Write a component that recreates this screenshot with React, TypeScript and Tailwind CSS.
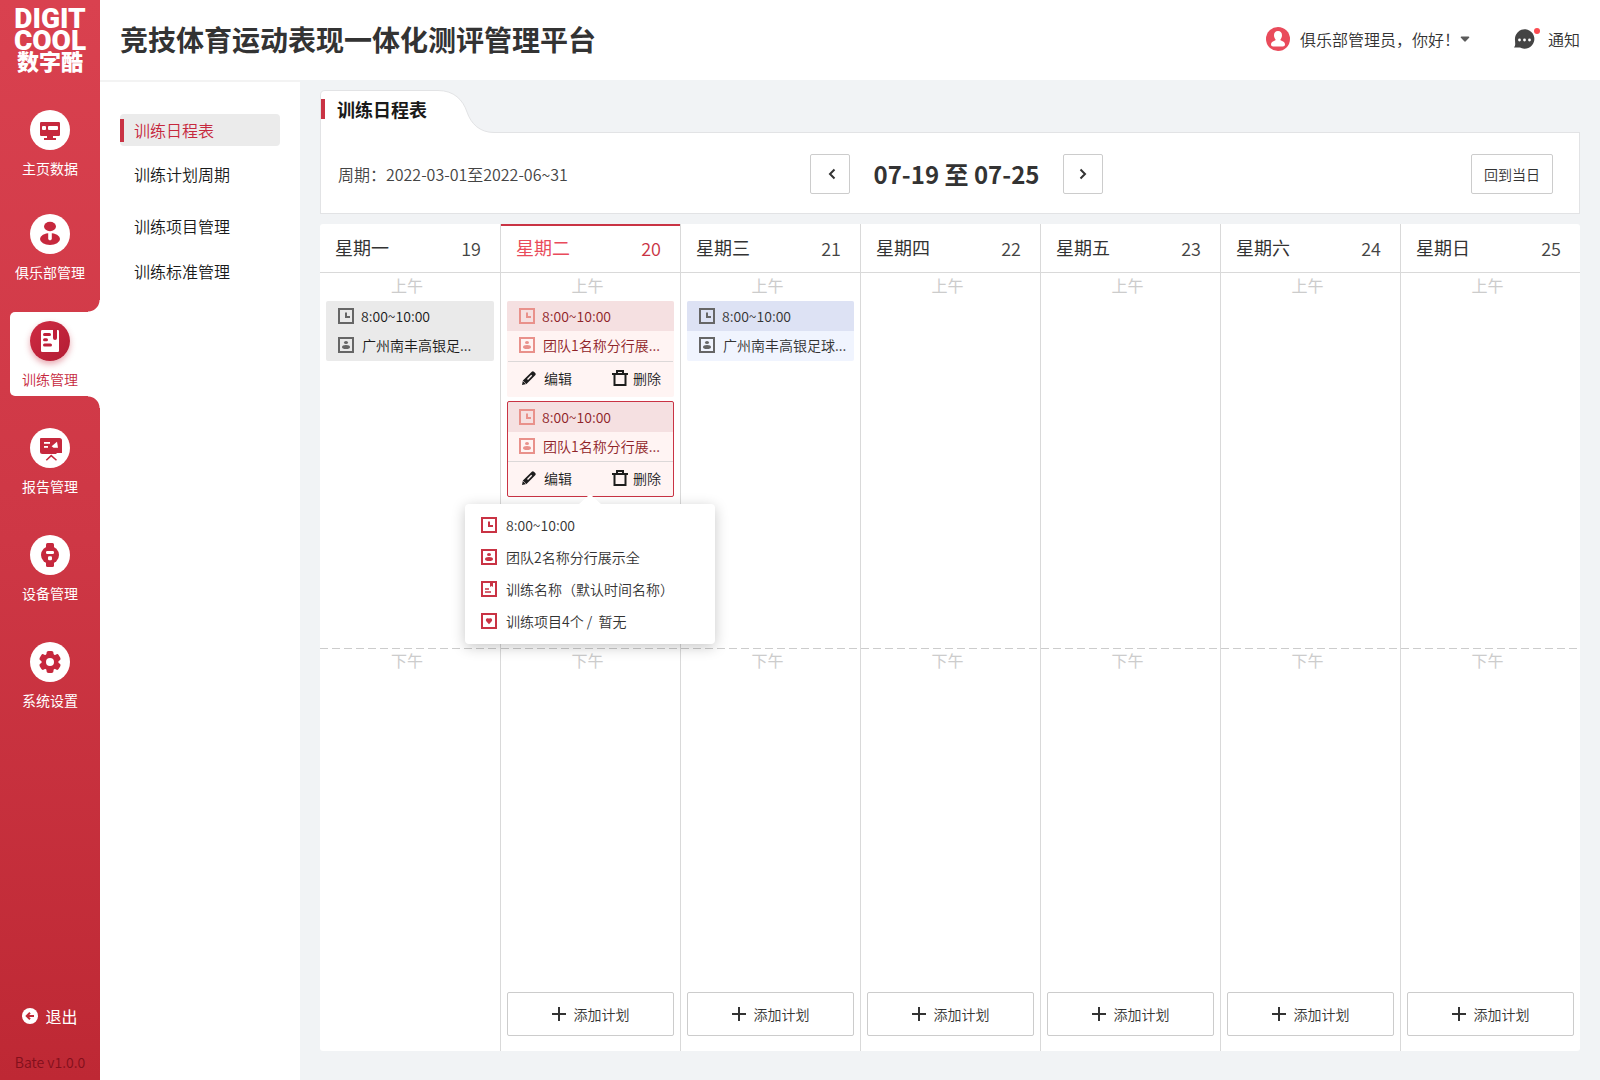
import type { ReactNode } from "react";

type IconProps = { className?: string };

/* ---------- Main menu icons, drawn inside a 40px disc ---------- */

function DashboardIcon() {
  return (
    <svg viewBox="0 0 40 40" className="size-10" aria-hidden="true">
      <rect x="10" y="12" width="20" height="14" rx="1.2" fill="#c6283d" />
      <rect x="12" y="16" width="4" height="4" rx="1" fill="#fff" />
      <rect x="18" y="16" width="10" height="4" rx="1" fill="#fff" />
      <path d="M17 25h6v3h3v2H14v-2h3z" fill="#c6283d" />
    </svg>
  );
}

function ClubIcon() {
  return (
    <svg viewBox="0 0 40 40" className="size-10" aria-hidden="true">
      <ellipse cx="20" cy="12.5" rx="6" ry="4.7" fill="#c6283d" />
      <ellipse cx="20" cy="25" rx="10" ry="6" fill="#c6283d" />
      <path d="M18.2 18h3.6v7.2L20 26.4l-1.8-1.2z" fill="#fff" />
    </svg>
  );
}

function TrainingIcon() {
  return (
    <svg viewBox="0 0 40 40" className="size-10" aria-hidden="true">
      <rect x="11" y="9" width="18" height="22" rx="1.2" fill="#fff" />
      <g fill="#c0203a">
        <rect x="13" y="12" width="8" height="3" rx="1.5" />
        <rect x="13" y="17.3" width="5" height="3" rx="1.5" />
        <rect x="13" y="22.5" width="9" height="3" rx="1.5" />
        <path d="M23 8.5h4v8.5a2 2 0 0 1-4 0z" />
      </g>
    </svg>
  );
}

function ReportIcon() {
  return (
    <svg viewBox="0 0 40 40" className="size-10" aria-hidden="true">
      <path d="M11 10h18.5a2.5 2.5 0 0 1 2.5 2.5V25h-5l-1 1H12.5A2.5 2.5 0 0 1 10 23.5V11a1 1 0 0 1 1-1z" fill="#c6283d" />
      <rect x="14" y="14" width="6" height="1.8" fill="#fff" />
      <rect x="14" y="18" width="4" height="1.8" fill="#fff" />
      <path d="M21.6 18.3 27 13.8l1 6h-4.5z" fill="#fff" />
      <path d="m16.3 32.3 4.9-4.7 5.3 4.7" fill="none" stroke="#c6283d" strokeWidth="1.5" />
    </svg>
  );
}

function WatchIcon() {
  return (
    <svg viewBox="0 0 40 40" className="size-10" aria-hidden="true">
      <g fill="#c6283d">
        <rect x="16" y="8" width="8" height="24" rx="1.5" />
        <circle cx="20" cy="20" r="9" />
      </g>
      <rect x="16" y="16" width="8" height="3" rx="1.2" fill="#fff" />
      <rect x="18" y="21.3" width="4" height="4" rx="1.2" fill="#fff" />
    </svg>
  );
}

function GearIcon() {
  return (
    <svg viewBox="0 0 40 40" className="size-10" aria-hidden="true">
      <g fill="#c6283d">
        <circle cx="20" cy="20" r="8.5" />
        <rect x="16.5" y="9" width="7" height="22" rx="2" />
        <rect x="16.5" y="9" width="7" height="22" rx="2" transform="rotate(60 20 20)" />
        <rect x="16.5" y="9" width="7" height="22" rx="2" transform="rotate(120 20 20)" />
      </g>
      <circle cx="20" cy="20" r="4" fill="#fff" />
    </svg>
  );
}

/* ---------- 16px boxed icons ---------- */

function Boxed({ className = "", children }: IconProps & { children: ReactNode }) {
  return (
    <svg viewBox="0 0 16 16" className={`size-4 shrink-0 ${className}`} aria-hidden="true">
      <rect x="1" y="1" width="14" height="14" fill="none" stroke="currentColor" strokeWidth="2" />
      {children}
    </svg>
  );
}

function ClockIcon({ className }: IconProps) {
  return (
    <Boxed className={className}>
      <path d="M8 4.500V9h4" fill="none" stroke="currentColor" strokeWidth="2" />
    </Boxed>
  );
}

function TeamIcon({ className }: IconProps) {
  return (
    <Boxed className={className}>
      <ellipse cx="8" cy="5.6" rx="2" ry="1.5" fill="currentColor" />
      <ellipse cx="8" cy="10" rx="4" ry="2" fill="currentColor" />
    </Boxed>
  );
}

function PlanIcon({ className }: IconProps) {
  return (
    <Boxed className={className}>
      <path d="M9 2h3v4L10.500 5 9 6z" fill="currentColor" />
      <path d="M4 8h4M4 11h6" stroke="currentColor" strokeWidth="1.6" />
    </Boxed>
  );
}

function HeartIcon({ className }: IconProps) {
  return (
    <Boxed className={className}>
      <path d="M8 11.2 5.3 8.3C4 6.5 5.8 4.2 8 5.7c2.2-1.5 4 .8 2.7 2.6z" fill="currentColor" />
    </Boxed>
  );
}

function PencilIcon() {
  return (
    <svg viewBox="0 0 14 14" className="size-3.5" aria-hidden="true">
      <path d="M0 14 .9 9.5 9.8.8a1.5 1.5 0 0 1 2.1 0l1.3 1.3a1.5 1.5 0 0 1 0 2.100L4.500 13z" fill="#1d1d1d" />
      <path d="m5.500 8.500 4.200-4.200" stroke="#fff4f3" strokeWidth="1.4" />
      <path d="m.8 9.800 3.500 3.400" stroke="#fff4f3" strokeWidth=".6" />
    </svg>
  );
}

function TrashIcon() {
  return (
    <svg viewBox="0 0 16 16" className="size-4" aria-hidden="true">
      <path d="M0 4h16M5 4V1h6v3M2.500 4v11h11V4" fill="none" stroke="#1d1d1d" strokeWidth="2" />
    </svg>
  );
}

/* ---------- Shell ---------- */

const menu = [
  { label: "主页数据", Icon: DashboardIcon },
  { label: "俱乐部管理", Icon: ClubIcon },
  { label: "训练管理", Icon: TrainingIcon, active: true },
  { label: "报告管理", Icon: ReportIcon },
  { label: "设备管理", Icon: WatchIcon },
  { label: "系统设置", Icon: GearIcon },
];

function Sidebar() {
  return (
    <aside className="flex w-[100px] shrink-0 flex-col bg-linear-to-b from-[#d9414f] via-[#ce3745] to-[#be2834] text-white">
      <div className="flex h-[101px] flex-col items-center pt-2 text-center font-['Roboto',sans-serif] text-[28px] font-black leading-[22px] whitespace-nowrap">
        <span>DIGIT</span>
        <span>COOL</span>
        <span className="font-['Noto_Sans_CJK_SC',sans-serif] text-[22px] leading-4">数字酷</span>
      </div>
      <nav aria-label="主菜单" className="flex flex-col gap-[23px]">
        {menu.map(({ label, Icon, active }) => (
          <a
            key={label}
            href="#"
            aria-current={active ? "page" : undefined}
            className={
              active
                ? "relative ml-2.5 flex h-[84px] flex-col items-center rounded-l-[5px] bg-white pt-[9px] pr-2.5 font-[350] text-[#c6283d] before:absolute before:-top-3 before:right-0 before:size-3 before:bg-[radial-gradient(circle_at_0_0,transparent_11px,white_12px)] after:absolute after:right-0 after:-bottom-3 after:size-3 after:bg-[radial-gradient(circle_at_0_100%,transparent_11px,white_12px)]"
                : "flex h-[84px] flex-col items-center pt-[9px] first:h-[81px]"
            }
          >
            <span
              className={
                active
                  ? "size-10 rounded-full bg-linear-to-br from-[#cf2b42] to-[#b31c34] shadow-[0_3px_6px_rgba(198,40,61,0.4)]"
                  : "size-10 rounded-full bg-white"
              }
            >
              <Icon />
            </span>
            <span className="mt-2 text-sm">{label}</span>
          </a>
        ))}
      </nav>
      <button type="button" className="mt-auto flex items-center justify-center gap-[7px] text-base">
        <svg viewBox="0 0 16 16" className="size-4" aria-hidden="true">
          <circle cx="8" cy="8" r="8" fill="#fff" />
          <path d="M12 8H5M8 4.700 4.700 8 8 11.300" fill="none" stroke="#c02a37" strokeWidth="2" />
        </svg>
        退出
      </button>
      <p className="mt-6 mb-2 text-center text-sm font-[350] text-[#82101c]">Bate v1.0.0</p>
    </aside>
  );
}

function Header() {
  return (
    <header className="flex h-20 items-center justify-between px-5 pb-0.5 text-[#333]">
      <h1 className="text-[28px] font-bold">竞技体育运动表现一体化测评管理平台</h1>
      <div className="flex items-center text-base font-[350]">
        <button type="button" className="flex items-center">
          <svg viewBox="0 0 24 24" className="mr-2.5 size-6" aria-hidden="true">
            <circle cx="12" cy="12" r="12" fill="#e94b5b" />
            <path d="M12 4c2.600 0 4 1.900 4 4.300 0 1.700-.7 3-1.400 3.900-.4.600-.2 1 .4 1.200 2.300.8 4 1.600 4 4.100 0 1.200-.9 2-2.200 2H7.200c-1.300 0-2.200-.8-2.200-2 0-2.500 1.700-3.300 4-4.100.6-.2.8-.6.4-1.200C8.700 11.300 8 10 8 8.300 8 5.900 9.400 4 12 4z" fill="#fff" />
          </svg>
          俱乐部管理员，你好！
          <svg viewBox="0 0 10 6" className="h-1.5 w-2.5" aria-hidden="true">
            <path d="M1.500.5h7c.8 0 1.100.8.6 1.300L6 5.100a1.300 1.300 0 0 1-2 0L.9 1.800C.4 1.300.7.5 1.500.5z" fill="#5b5b5b" />
          </svg>
        </button>
        <button type="button" className="ml-11 flex items-center gap-2">
          <svg viewBox="0 0 26 24" className="h-6 w-[26px]" aria-hidden="true">
            <path d="M0 20.500c1-1.300 1.200-2.500 1.200-3.800L1 13a9.700 9.700 0 1 1 5 7.500z" fill="#444" />
            <circle cx="5.500" cy="13" r="1.400" fill="#fff" />
            <circle cx="10.500" cy="13" r="1.400" fill="#fff" />
            <circle cx="15.500" cy="13" r="1.400" fill="#fff" />
            <circle cx="23" cy="4" r="3" fill="#fc4b50" />
          </svg>
          通知
        </button>
      </div>
    </header>
  );
}

const subMenu = [
  ["训练日程表", "训练计划周期"],
  ["训练项目管理", "训练标准管理"],
];

function SubMenu() {
  return (
    <nav aria-label="训练管理" className="flex w-[200px] shrink-0 flex-col gap-5 border-t-2 border-[#f3f3f3] bg-white px-5 pt-8 text-base font-[350] text-[#1a1a1a]">
      {subMenu.map((group) => (
        <div key={group[0]} className="flex flex-col gap-[13px]">
          {group.map((label) => {
            const active = label === "训练日程表";
            return (
              <a
                key={label}
                href="#"
                aria-current={active ? "page" : undefined}
                className={
                  active
                    ? "flex h-8 items-center rounded-sm bg-[#ebebeb] text-[#c6283d] before:mr-2.5 before:h-[23px] before:w-1 before:bg-[#c93344]"
                    : "flex h-8 items-center pb-0.5 pl-3.5"
                }
              >
                {label}
              </a>
            );
          })}
        </div>
      ))}
    </nav>
  );
}

/* ---------- Schedule ---------- */

function PeriodPanel() {
  return (
    <section>
      <div className="relative flex h-[42px] items-center pb-1">
        <svg viewBox="0 0 176 43" className="absolute top-0 left-0 z-10 h-[43px] w-[176px]" aria-hidden="true">
          <path
            d="M.5 43V5Q.5.5 5 .5H118C134 .5 143 10 147 22 151 34 160 42.500 174 42.500H176V43z"
            fill="#fff"
          />
          <path
            d="M.5 43V5Q.5.5 5 .5H118C134 .5 143 10 147 22 151 34 160 42.500 174 42.500H176"
            fill="none"
            stroke="#e2e3e5"
          />
        </svg>
        <h2 className="relative z-20 ml-px flex items-center text-lg leading-5 font-bold text-[#1a1a1a] before:mr-3 before:h-5 before:w-1 before:bg-[#c93344]">
          训练日程表
        </h2>
      </div>
      <div className="grid h-[82px] grid-cols-[1fr_auto_1fr] items-center border border-[#e2e3e5] bg-white pt-0.5 pr-1 pl-[17px]">
        <p className="text-base font-[350] text-[#444]">周期：2022-03-01至2022-06~31</p>
        <div className="flex items-center">
          <button type="button" aria-label="上一周" className="grid size-10 place-items-center rounded-xs border border-[#ccc]">
            <svg viewBox="0 0 8 12" className="ml-1 h-3 w-2" aria-hidden="true">
              <path d="M6.500 1.500 2 6l4.500 4.500" fill="none" stroke="#333" strokeWidth="2" />
            </svg>
          </button>
          <p className="px-6 text-2xl font-bold text-[#333]">07-19 至 07-25</p>
          <button type="button" aria-label="下一周" className="grid size-10 place-items-center rounded-xs border border-[#ccc]">
            <svg viewBox="0 0 8 12" className="h-3 w-2" aria-hidden="true">
              <path d="M1.500 1.500 6 6l-4.500 4.500" fill="none" stroke="#333" strokeWidth="2" />
            </svg>
          </button>
        </div>
        <button type="button" className="mr-[22px] h-10 justify-self-end rounded-xs border border-[#ccc] px-3 text-sm font-[350] text-[#333]">
          回到当日
        </button>
      </div>
    </section>
  );
}

function PlainCard({ team, tone }: { team: string; tone: "gray" | "blue" }) {
  const blue = tone === "blue";
  return (
    <article className={`overflow-hidden rounded-xs text-sm font-[350] ${blue ? "bg-[#f0f4fe] text-[#333]" : "bg-[#eaeaea] text-[#1a1a1a]"}`}>
      <p className={`flex h-[30px] items-center gap-[7px] pl-3 ${blue ? "bg-[#dde2f4]" : ""}`}>
        <ClockIcon className="text-[#666]" />
        8:00~10:00
      </p>
      <p className="flex h-7 items-center gap-2 pl-3 whitespace-nowrap">
        <TeamIcon className="text-[#666]" />
        {team}
      </p>
      <div className="h-0.5" />
    </article>
  );
}

function EditableCard({ selected, children }: { selected?: boolean; children?: ReactNode }) {
  return (
    <article
      className={`relative flex h-24 flex-col rounded-xs bg-[#fff4f3] text-sm font-[350] text-[#8f2328] ${
        selected ? "outline-1 -outline-offset-1 outline-[#c93344]" : ""
      }`}
    >
      <p className={`flex h-[30px] items-center gap-[7px] bg-[#f5e0e1] ${selected ? "mx-px mt-px pl-[11px]" : "rounded-t-xs pl-3"}`}>
        <ClockIcon className="text-[#e9918b]" />
        8:00~10:00
      </p>
      <p className="flex h-[27px] items-center gap-2 pl-3 whitespace-nowrap">
        <TeamIcon className="text-[#e9918b]" />
        团队1名称分行展...
      </p>
      <div
        className={`mx-px flex flex-1 items-center justify-between border-t border-[#dcd8d8] pr-3 pb-1 pl-3.5 text-[#1a1a1a] ${
          selected ? "mt-0.5" : "mt-[3px]"
        }`}
      >
        <button type="button" className="flex items-center gap-2">
          <PencilIcon />
          编辑
        </button>
        <button type="button" className="flex items-center gap-[5px]">
          <TrashIcon />
          删除
        </button>
      </div>
      {children}
    </article>
  );
}

const details = [
  { Icon: ClockIcon, text: "8:00~10:00" },
  { Icon: TeamIcon, text: "团队2名称分行展示全" },
  { Icon: PlanIcon, text: "训练名称（默认时间名称）" },
  { Icon: HeartIcon, text: "训练项目4个 /  暂无" },
];

function DetailPopover() {
  return (
    <div
      role="tooltip"
      className="absolute top-[103px] -left-[42px] z-30 w-[250px] rounded-sm bg-white pt-1 pb-2 pl-4 text-[#333] shadow-[0_3px_14px_rgba(0,0,0,0.22)]"
    >
      <svg viewBox="0 0 24 10" className="absolute -top-2.5 left-1/2 h-2.5 w-6 -translate-x-1/2" aria-hidden="true">
        <path d="M1 10 10.500 1.500Q12 0 13.500 1.500L23 10z" fill="#fff" />
      </svg>
      <ul>
        {details.map(({ Icon, text }) => (
          <li key={text} className="flex h-8 items-center gap-[9px] pt-px whitespace-pre">
            <Icon className="text-[#c93344]" />
            {text}
          </li>
        ))}
      </ul>
    </div>
  );
}

const days: { name: string; date: number; today?: boolean; closed?: boolean; plans?: ReactNode }[] = [
  { name: "星期一", date: 19, closed: true, plans: <PlainCard tone="gray" team="广州南丰高银足..." /> },
  {
    name: "星期二",
    date: 20,
    today: true,
    plans: (
      <>
        <EditableCard />
        <EditableCard selected>
          <DetailPopover />
        </EditableCard>
      </>
    ),
  },
  { name: "星期三", date: 21, plans: <PlainCard tone="blue" team="广州南丰高银足球..." /> },
  { name: "星期四", date: 22 },
  { name: "星期五", date: 23 },
  { name: "星期六", date: 24 },
  { name: "星期日", date: 25 },
];

function WeekTable() {
  return (
    <table className="mt-2.5 w-full table-fixed border-separate border-spacing-0 rounded-[3px] bg-white">
      <thead>
        <tr>
          {days.map((day) => (
            <th key={day.name} scope="col" className="h-[49px] border-b border-l border-[#d9d9d9] p-0 font-normal first:border-l-0">
              <div
                className={`flex h-12 items-center justify-between border-t-2 pr-[19px] pb-1 pl-[15px] text-lg ${
                  day.today ? "border-[#c93344] text-[#e94b5b]" : "border-transparent text-[#333]"
                }`}
              >
                <span>{day.name}</span>
                <span className={`pt-0.5 font-[350] ${day.today ? "text-[#c93344]" : "text-[#444]"}`}>{day.date}</span>
              </div>
            </th>
          ))}
        </tr>
      </thead>
      <tbody>
        <tr>
          {days.map((day) => (
            <td key={day.name} className="h-[375px] border-l border-[#d9d9d9] p-0 px-1.5 align-top first:border-l-0">
              <p className="h-7 pr-1.5 text-center text-base text-[#ccc]">上午</p>
              <div className="flex flex-col gap-1">{day.plans}</div>
            </td>
          ))}
        </tr>
        <tr>
          {days.map((day) => (
            <td
              key={day.name}
              className="border-l border-[#d9d9d9] bg-[repeating-linear-gradient(90deg,#ccc_0_8px,transparent_8px_12px)] bg-[length:100%_1px] bg-no-repeat p-0 px-1.5 align-top first:border-l-0"
            >
              <div className="flex min-h-[403px] flex-col justify-between pb-[15px]">
                <p className="pr-1.5 text-center text-base text-[#ccc]">下午</p>
                {!day.closed && (
                  <button
                    type="button"
                    className="flex h-11 w-full items-center justify-center gap-2 rounded-xs border border-[#ccc] text-sm font-[350] text-[#333]"
                  >
                    <svg viewBox="0 0 14 14" className="size-3.5" aria-hidden="true">
                      <path d="M7 0v14M0 7h14" stroke="#333" strokeWidth="2" />
                    </svg>
                    添加计划
                  </button>
                )}
              </div>
            </td>
          ))}
        </tr>
      </tbody>
    </table>
  );
}

export default function App() {
  return (
    <div className="flex min-h-screen bg-white font-['Noto_Sans_CJK_SC',sans-serif]">
      <Sidebar />
      <div className="flex min-w-0 flex-1 flex-col">
        <Header />
        <div className="flex flex-1">
          <SubMenu />
          <main className="min-w-0 flex-1 bg-[#f1f3f5] px-5 pt-2.5">
            <PeriodPanel />
            <WeekTable />
          </main>
        </div>
      </div>
    </div>
  );
}
